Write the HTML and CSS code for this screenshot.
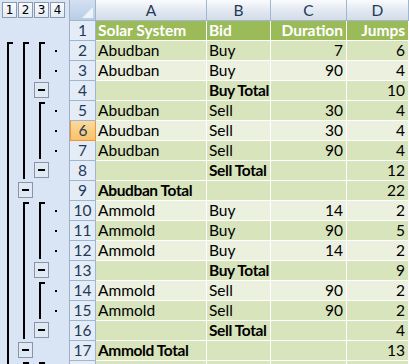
FILE: index.html
```html
<!DOCTYPE html>
<html lang="en">
<head>
    <meta charset="UTF-8">
    <title>Subtotals</title>
    <link rel="stylesheet" href="styles.css">
</head>
<body>
    <div class="sheet">
        <div class="gutter">
            <div class="levels">
                <span class="level-btn">1</span>
                <span class="level-btn">2</span>
                <span class="level-btn">3</span>
                <span class="level-btn">4</span>
            </div>
            <svg class="outline" width="69" height="343" viewBox="0 21 69 343">
                <g fill="#000">
                    <!-- level 1 -->
                    <rect x="7" y="42" width="2" height="322"/>
                    <rect x="7" y="42" width="6" height="2"/>
                    <!-- level 2 -->
                    <rect x="23" y="42" width="2" height="137"/>
                    <rect x="23" y="42" width="6" height="2"/>
                    <rect x="23" y="202" width="2" height="137"/>
                    <rect x="23" y="202" width="6" height="2"/>
                    <rect x="23" y="362" width="2" height="4"/>
                    <rect x="23" y="362" width="6" height="2"/>
                    <!-- level 3 -->
                    <rect x="39" y="42" width="2" height="37"/>
                    <rect x="39" y="42" width="6" height="2"/>
                    <rect x="39" y="102" width="2" height="57"/>
                    <rect x="39" y="102" width="6" height="2"/>
                    <rect x="39" y="202" width="2" height="57"/>
                    <rect x="39" y="202" width="6" height="2"/>
                    <rect x="39" y="282" width="2" height="37"/>
                    <rect x="39" y="282" width="6" height="2"/>
                    <rect x="39" y="362" width="2" height="4"/>
                    <rect x="39" y="362" width="6" height="2"/>
                    <!-- detail dots -->
                    <rect x="55" y="50" width="2" height="2"/>
                    <rect x="55" y="70" width="2" height="2"/>
                    <rect x="55" y="110" width="2" height="2"/>
                    <rect x="55" y="130" width="2" height="2"/>
                    <rect x="55" y="150" width="2" height="2"/>
                    <rect x="55" y="210" width="2" height="2"/>
                    <rect x="55" y="230" width="2" height="2"/>
                    <rect x="55" y="250" width="2" height="2"/>
                    <rect x="55" y="290" width="2" height="2"/>
                    <rect x="55" y="310" width="2" height="2"/>
                </g>
                <!-- collapse buttons -->
                <g class="toggle">
                    <rect x="34.5" y="82.5" width="14" height="15"/>
                    <rect x="34.5" y="162.5" width="14" height="15"/>
                    <rect x="34.5" y="262.5" width="14" height="15"/>
                    <rect x="34.5" y="322.5" width="14" height="15"/>
                    <rect x="18.5" y="182.5" width="14" height="15"/>
                    <rect x="18.5" y="342.5" width="14" height="15"/>
                </g>
                <g fill="#000">
                    <rect x="38" y="89" width="7" height="2"/>
                    <rect x="38" y="169" width="7" height="2"/>
                    <rect x="38" y="269" width="7" height="2"/>
                    <rect x="38" y="329" width="7" height="2"/>
                    <rect x="22" y="189" width="7" height="2"/>
                    <rect x="22" y="349" width="7" height="2"/>
                </g>
            </svg>
        </div>

        <div class="grid">
            <div class="row col-head">
                <div class="corner"></div>
                <div>A</div><div>B</div><div>C</div><div>D</div>
            </div>
            <div class="row head">
                <div class="num">1</div>
                <div>Solar System</div><div>Bid</div><div class="r">Duration</div><div class="r">Jumps</div>
            </div>
            <div class="row dark">
                <div class="num">2</div>
                <div>Abudban</div><div>Buy</div><div class="r">7</div><div class="r">6</div>
            </div>
            <div class="row light">
                <div class="num">3</div>
                <div>Abudban</div><div>Buy</div><div class="r">90</div><div class="r">4</div>
            </div>
            <div class="row dark">
                <div class="num">4</div>
                <div></div><div class="b">Buy Total</div><div></div><div class="r">10</div>
            </div>
            <div class="row dark">
                <div class="num">5</div>
                <div>Abudban</div><div>Sell</div><div class="r">30</div><div class="r">4</div>
            </div>
            <div class="row light">
                <div class="num selected">6</div>
                <div>Abudban</div><div>Sell</div><div class="r">30</div><div class="r">4</div>
            </div>
            <div class="row dark">
                <div class="num">7</div>
                <div>Abudban</div><div>Sell</div><div class="r">90</div><div class="r">4</div>
            </div>
            <div class="row dark">
                <div class="num">8</div>
                <div></div><div class="b">Sell Total</div><div></div><div class="r">12</div>
            </div>
            <div class="row dark">
                <div class="num">9</div>
                <div class="b">Abudban Total</div><div></div><div></div><div class="r">22</div>
            </div>
            <div class="row light">
                <div class="num">10</div>
                <div>Ammold</div><div>Buy</div><div class="r">14</div><div class="r">2</div>
            </div>
            <div class="row dark">
                <div class="num">11</div>
                <div>Ammold</div><div>Buy</div><div class="r">90</div><div class="r">5</div>
            </div>
            <div class="row light">
                <div class="num">12</div>
                <div>Ammold</div><div>Buy</div><div class="r">14</div><div class="r">2</div>
            </div>
            <div class="row dark">
                <div class="num">13</div>
                <div></div><div class="b">Buy Total</div><div></div><div class="r">9</div>
            </div>
            <div class="row light">
                <div class="num">14</div>
                <div>Ammold</div><div>Sell</div><div class="r">90</div><div class="r">2</div>
            </div>
            <div class="row dark">
                <div class="num">15</div>
                <div>Ammold</div><div>Sell</div><div class="r">90</div><div class="r">2</div>
            </div>
            <div class="row dark">
                <div class="num">16</div>
                <div></div><div class="b">Sell Total</div><div></div><div class="r">4</div>
            </div>
            <div class="row dark">
                <div class="num">17</div>
                <div class="b">Ammold Total</div><div></div><div></div><div class="r">13</div>
            </div>
            <div class="row dark">
                <div class="num"></div>
                <div></div><div></div><div></div><div></div>
            </div>
        </div>
    </div>
</body>
</html>
```

FILE: styles.css
```css
* {
    box-sizing: border-box;
    margin: 0;
    padding: 0;
}

body {
    width: 409px;
    height: 364px;
    overflow: hidden;
    background: #fff;
    font-family: Lato, 'Liberation Sans', sans-serif;
    font-size: 15.5px;
    color: #000;
}

.sheet {
    display: flex;
}

/* outline gutter */
.gutter {
    width: 70px;
    flex: none;
    background: #d9e5f4;
    border-right: 1px solid #9eb1c8;
}

.levels {
    height: 21px;
    display: flex;
    gap: 1px;
    padding: 2px 0 0 2px;
}

.level-btn {
    width: 15px;
    height: 16px;
    border: 1px solid #8c9aae;
    background: linear-gradient(#fbfcfe, #e2eaf5);
    font-family: 'DejaVu Sans', sans-serif;
    font-size: 12px;
    line-height: 14px;
    text-align: center;
    color: #000;
}

.outline {
    display: block;
}

.toggle rect {
    fill: #dfe8f5;
    stroke: #8a94a3;
    stroke-width: 1;
}

/* cells */
.grid {
    flex: 1;
}

.row {
    display: grid;
    grid-template-columns: 26px 111px 64px 76px 1fr;
    height: 20px;
}

.row > div {
    border-right: 1px solid #fff;
    border-bottom: 1px solid #fff;
    padding: 0 2px;
    line-height: 19px;
    white-space: nowrap;
    overflow: hidden;
}

.row .r {
    text-align: right;
    padding-right: 3px;
}

.row .b {
    font-weight: bold;
    letter-spacing: -0.4px;
    padding-right: 0;
}

.row .num {
    background: #e4ecf7;
    border-right-color: #9eb6ce;
    border-bottom-color: #9eb6ce;
    color: #233a56;
    text-align: center;
    padding: 0;
}

.row .num.selected {
    background: linear-gradient(#fbd9a0, #f6c46a);
    border: 1px solid #f29536;
    border-top: none;
}

.col-head {
    height: 21px;
}

.col-head > div {
    background: linear-gradient(#f9fbfd, #dfe6f0 60%, #d4dce9);
    border-right-color: #9eb6ce;
    border-bottom-color: #9eb6ce;
    color: #233a56;
    text-align: center;
    padding-top: 1px;
}

.col-head .corner {
    position: relative;
    background: linear-gradient(#d3e0f1, #b9cde7);
}

.col-head .corner::after {
    content: '';
    position: absolute;
    right: 2px;
    bottom: 2px;
    border-style: solid;
    border-width: 0 0 11px 11px;
    border-color: transparent transparent #eef3fa transparent;
}

.head > div:not(.num) {
    background: #9bbb59;
    color: #fff;
    font-weight: bold;
}

.dark > div:not(.num) {
    background: #d8e4bc;
}

.light > div:not(.num) {
    background: #ebf1de;
}
```
